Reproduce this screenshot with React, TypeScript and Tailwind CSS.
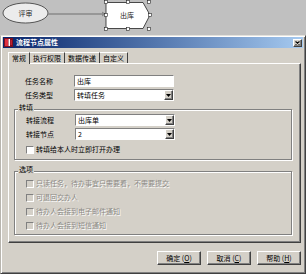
import React from "react";

const font = "font-['Noto_Sans_CJK_SC','Noto_Sans_CJK_JP',sans-serif]";

// sunken 3d edge used by inputs/checkboxes
const sunken = "border border-t-[#808080] border-l-[#808080] border-b-white border-r-white";
const raised =
  "border border-t-white border-l-white border-b-[#404040] border-r-[#404040] shadow-[inset_-1px_-1px_0_#808080]";

function Canvas() {
  const handles = [
    [106, 2], [128, 2], [149, 2],
    [106, 15], [150, 15],
    [106, 29], [128, 29], [149, 29],
  ];
  return (
    <svg width="306" height="35" className="block">
      <rect width="306" height="35" fill="#c0c0c0" />
      <ellipse cx="25.5" cy="13" rx="22.5" ry="10" fill="#ececec" stroke="#333" strokeWidth="0.8" />
      <text x="25.5" y="16" fontSize="7" textAnchor="middle" fill="#222" fontFamily="Noto Sans CJK SC, sans-serif">
        评审
      </text>
      <line x1="48" y1="14" x2="103" y2="14" stroke="#8a8a8a" strokeWidth="1.5" />
      <path d="M102 11.5 L106 14 L102 16.5 Z" fill="#8a8a8a" />
      <path d="M106 2.5 L143 2.5 L150 15 L143 28.5 L106 28.5 Z" fill="#fff" stroke="#222" strokeWidth="0.8" />
      <text x="127" y="18" fontSize="7" textAnchor="middle" fill="#222" fontFamily="Noto Sans CJK SC, sans-serif">
        出库
      </text>
      {handles.map(([x, y], i) => (
        <rect key={i} x={x - 1.5} y={y - 1.5} width="3" height="3" fill="#fff" stroke="#222" strokeWidth="0.6" />
      ))}
    </svg>
  );
}

function TextInput({ value }: { value: string }) {
  return (
    <div className={`w-[100px] h-[12px] bg-white ${sunken} flex items-center pl-[2px] leading-none`}>
      {value}
    </div>
  );
}

function Select({ value }: { value: string }) {
  return (
    <div className={`w-[100px] h-[12px] bg-white ${sunken} flex items-center leading-none`}>
      <span className="flex-1 pl-[2px]">{value}</span>
      <div className={`w-[9px] h-[10px] bg-[#d4d0c8] ${raised} flex items-center justify-center`}>
        <svg width="5" height="3" viewBox="0 0 5 3">
          <path d="M0 0 H5 L2.5 3 Z" fill="#000" />
        </svg>
      </div>
    </div>
  );
}

function Row({ label, children }: { label: string; children: React.ReactNode }) {
  return (
    <div className="flex items-center h-[12px]">
      <span className="w-[49px] leading-none">{label}</span>
      {children}
    </div>
  );
}

function Check({ label, disabled }: { label: string; disabled?: boolean }) {
  return (
    <div className="flex items-center h-[9px] gap-[2px]">
      <div className={`w-[8px] h-[8px] ${disabled ? "bg-[#d4d0c8]" : "bg-white"} ${sunken}`} />
      <span
        className={`leading-none whitespace-nowrap ${
          disabled ? "text-[#8c8a85] [text-shadow:1px_1px_0_#fff]" : ""
        }`}
      >
        {label}
      </span>
    </div>
  );
}

function Group({ title, className, children }: { title: string; className: string; children: React.ReactNode }) {
  return (
    <div
      className={`relative ml-[5px] w-[278px] border border-[#808080] shadow-[inset_1px_1px_0_#fff,1px_1px_0_#fff] ${className}`}
    >
      <span className="absolute -top-[6px] left-[3px] bg-[#d4d0c8] px-[1px] leading-none">{title}</span>
      {children}
    </div>
  );
}

function Button({ label, hot }: { label: string; hot: string }) {
  return (
    <div className={`w-[44px] h-[14px] bg-[#d4d0c8] ${raised} flex items-center justify-center leading-none`}>
      {label} (<span className="underline">{hot}</span>)
    </div>
  );
}

export default function App() {
  const tabs = ["常规", "执行权限", "数据传递", "自定义"];
  return (
    <div className={`w-[306px] h-[274px] bg-[#c0c0c0] overflow-hidden text-[7px] text-black ${font}`}>
      <Canvas />

      {/* Dialog */}
      <div className="h-[239px] bg-[#d4d0c8] border border-t-[#e4e2dc] border-l-[#b8b5ae] border-r-[#404040] border-b-[#404040] shadow-[inset_1px_1px_0_#fff,inset_-1px_-1px_0_#808080] px-[2px] pt-[1px]">
        {/* Title bar */}
        <div className="h-[11px] flex items-center bg-gradient-to-r from-[#0a246a] to-[#a6caf0] pl-[1px] pr-[1px]">
          <svg width="9" height="9" viewBox="0 0 9 9" className="shrink-0">
            <rect width="9" height="9" fill="#7a1020" />
            <rect x="1" y="1" width="3" height="7" fill="#e03040" />
            <rect x="4.5" y="1" width="1.5" height="7" fill="#fff" />
            <rect x="6.5" y="2" width="1.5" height="5" fill="#c02030" />
          </svg>
          <span className="ml-[3px] text-white font-bold leading-none">流程节点属性</span>
          <div className={`ml-auto w-[9px] h-[8px] bg-[#d4d0c8] ${raised} flex items-center justify-center`}>
            <svg width="5" height="4" viewBox="0 0 5 4">
              <path d="M0.5 0.5 L4.5 3.5 M4.5 0.5 L0.5 3.5" stroke="#000" strokeWidth="1.1" />
            </svg>
          </div>
        </div>

        {/* Tabs */}
        <div className="flex items-end h-[12px] mt-[3px] ml-[5px]">
          {tabs.map((t, i) =>
            i === 0 ? (
              <div
                key={t}
                className="h-[12px] px-[3px] flex items-center border border-b-0 border-t-white border-l-white border-r-[#404040] bg-[#d4d0c8] leading-none relative top-[1px] z-10"
              >
                {t}
              </div>
            ) : (
              <div
                key={t}
                className="h-[11px] px-[3px] flex items-center border-t border-r border-t-white border-r-[#404040] leading-none"
              >
                {t}
              </div>
            )
          )}
        </div>

        {/* Tab panel */}
        <div className="ml-[5px] w-[293px] h-[180px] border border-t-white border-l-white border-r-[#404040] border-b-[#404040] shadow-[inset_-1px_-1px_0_#808080]">
          <div className="flex flex-col gap-[2px] mt-[11px] ml-[16px]">
            <Row label="任务名称">
              <TextInput value="出库" />
            </Row>
            <Row label="任务类型">
              <Select value="转填任务" />
            </Row>
          </div>

          <Group title="转填" className="mt-[8px] h-[51px]">
            <div className="flex flex-col gap-[2px] pt-[4px] pl-[11px]">
              <Row label="转接流程">
                <Select value="出库单" />
              </Row>
              <Row label="转接节点">
                <Select value="2" />
              </Row>
            </div>
            <div className="mt-[5px] pl-[11px]">
              <Check label="转填给本人时立即打开办理" />
            </div>
          </Group>

          <Group title="选项" className="mt-[11px] h-[64px]">
            <div className="flex flex-col gap-[5px] pt-[7px] pl-[11px]">
              <Check disabled label="只读任务，待办事宜只需要看，不需要提交" />
              <Check disabled label="可退回交办人" />
              <Check disabled label="待办人会接到电子邮件通知" />
              <Check disabled label="待办人会接到短信通知" />
            </div>
          </Group>
        </div>

        {/* Buttons */}
        <div className="flex justify-end gap-[6px] mt-[8px] w-[298px]">
          <Button label="确定" hot="O" />
          <Button label="取消" hot="C" />
          <Button label="帮助" hot="H" />
        </div>
      </div>
    </div>
  );
}
